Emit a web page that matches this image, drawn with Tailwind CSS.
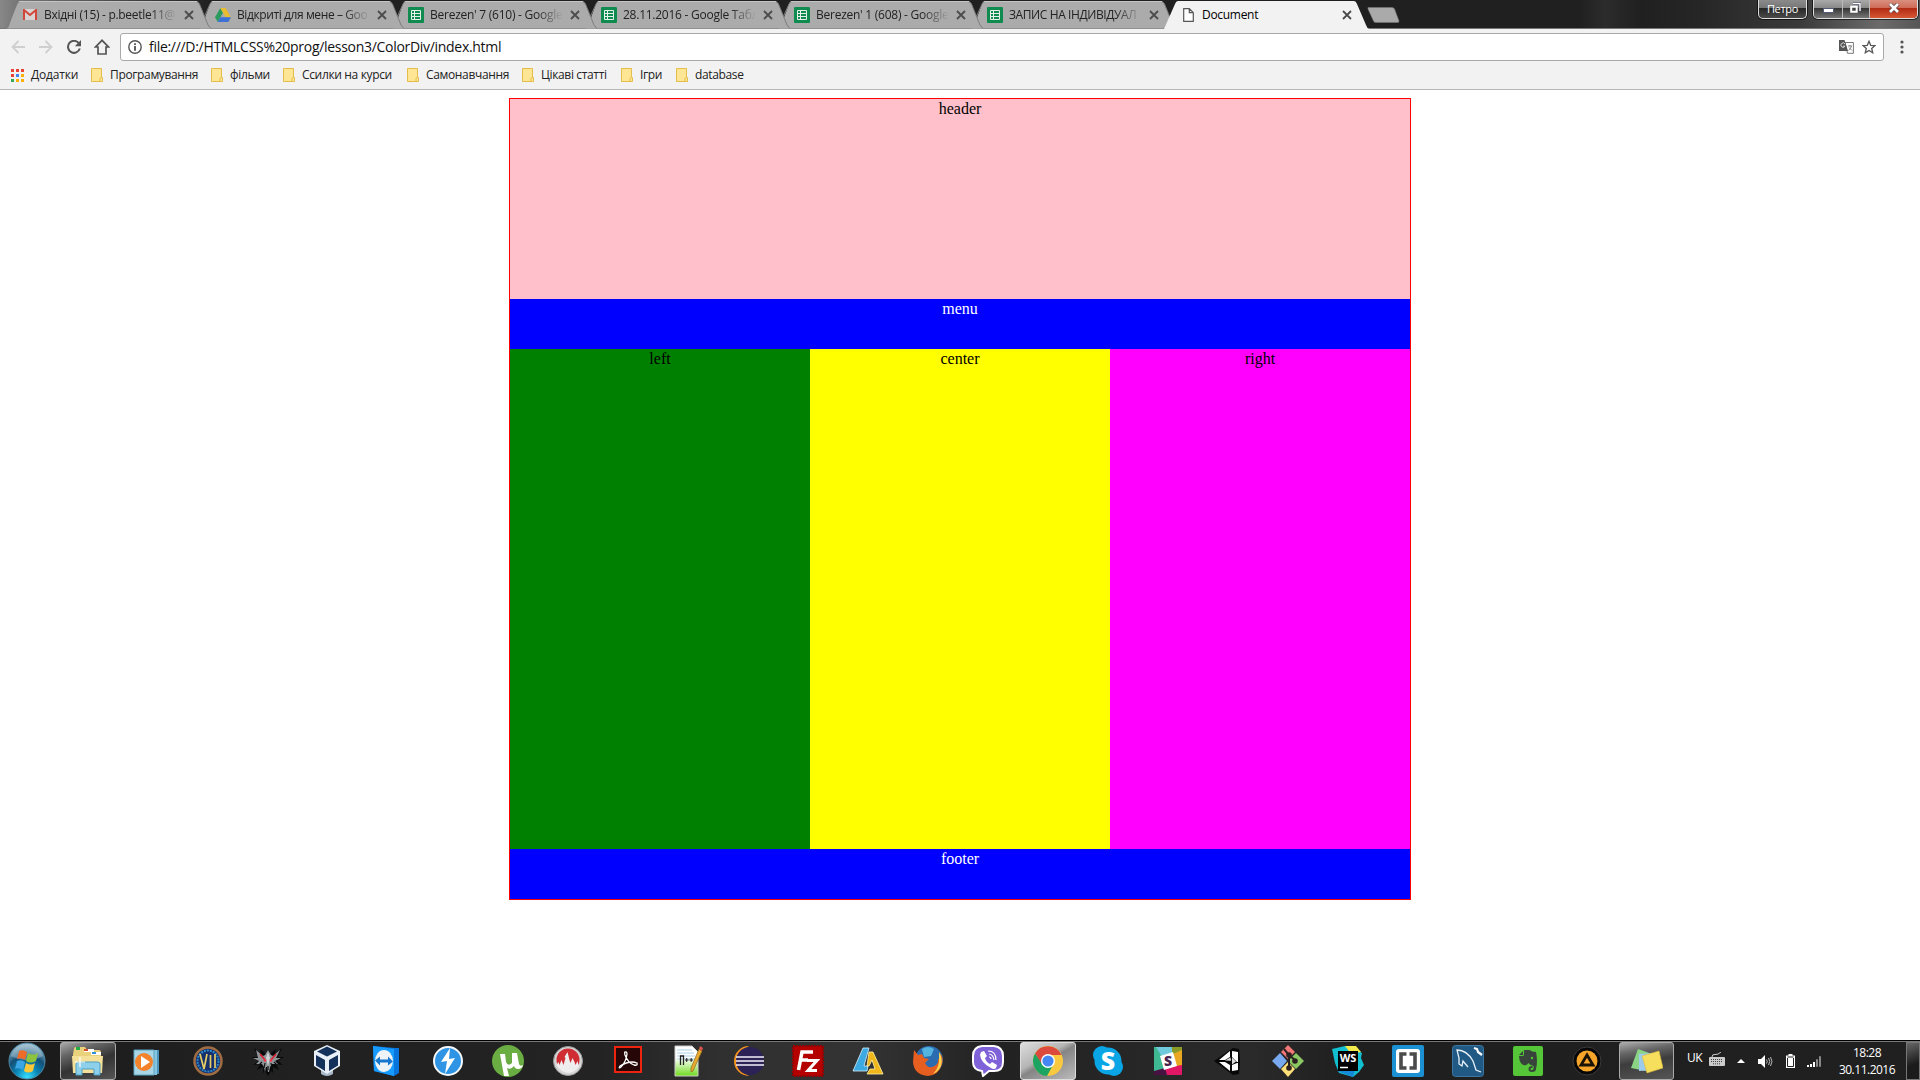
<!DOCTYPE html>
<html lang="uk">
<head>
<meta charset="utf-8">
<title>Document</title>
<script src="https://cdn.jsdelivr.net/npm/@tailwindcss/browser@4"></script>
</head>
<body class="w-[1920px] h-[1080px] overflow-hidden bg-white flex flex-col font-['Open_Sans','Noto_Sans',sans-serif] text-[12px] text-[#222]">

<svg class="hidden">
  <symbol id="tab" viewBox="0 0 205 29"><path d="M0 28.5 C3 28 3 26 4 23 L11 4 Q12 1 14 1 H190 Q192 1 193.500 4 L202 25 Q203 28 205 28.500Z" fill="#ababab"/><path d="M0 28.500 L11 4 Q12 1.500 14 1.500 H190 Q192 1.500 193.500 4 L202 25 L205 28.500" fill="none" stroke="#7d7d7d"/><path d="M13 1.500H191" stroke="#c4c4c4"/></symbol>
  <symbol id="sheet" viewBox="0 0 16 16"><rect width="16" height="16" rx="1" fill="#0f8b50"/><path d="M3.500 3.500h9v9h-9z M3.500 6.500h9 M3.500 9.500h9 M6.500 3.500v9" fill="none" stroke="#e6f0ea"/></symbol>
  <symbol id="close" viewBox="0 0 10 10"><path d="M1 1l8 8M9 1l-8 8" stroke="#4c4c4c" stroke-width="1.800"/></symbol>
  <symbol id="folder" viewBox="0 0 12 14"><path d="M.5.5h10v9h1v4H.5z" fill="#ffe694" stroke="#e5bd4b"/><path d="M9 13V10.500q0-1 1.500-1" fill="none" stroke="#e5bd4b"/></symbol>
</svg>

<!-- Tab strip -->
<header class="h-[29px] flex shrink-0 bg-[linear-gradient(90deg,#888_0,#777_16px,#202020_210px,#202020_1580px,#2c2c2c_1605px,#202020_1640px,#262626_1700px,#3a3a3a_1800px,#6b6b6b_1880px,#555_1920px)] border-b border-[#777]">
  <nav class="flex pl-[6px] h-[29px]">
    <div class="relative z-[6] w-[205px] -mr-3 h-[29px] flex items-center pl-[17px]">
      <svg class="absolute inset-0 w-[205px] h-[29px]"><use href="#tab"/></svg>
      <svg class="relative w-[14px] h-[11px] mr-[7px]" viewBox="0 0 14 11"><path d="M0 0h14v11H0z" fill="#d8d3d2"/><path d="M1 11V1l6 5 6-5v10" fill="none" stroke="#d2453a" stroke-width="2"/></svg>
      <span class="relative w-[133px] whitespace-nowrap tracking-[-0.3px] mask-r-from-80%">Вхідні (15) - p.beetle11@</span>
      <svg class="relative w-[10px] h-[10px] ml-[7px]"><use href="#close"/></svg>
    </div>
    <div class="relative z-[5] w-[205px] -mr-3 h-[29px] flex items-center pl-[16px]">
      <svg class="absolute inset-0 w-[205px] h-[29px]"><use href="#tab"/></svg>
      <svg class="relative w-4 h-[14px] mr-[6px]" viewBox="0 0 16 14"><path d="M5.300 0L0 9.300 2.700 14 8 4.700z" fill="#2c9c5e"/><path d="M5.300 0h5.400L16 9.300h-5.400z" fill="#e8bd31"/><path d="M5.400 9.300H16L13.300 14H2.700z" fill="#3c72d6"/></svg>
      <span class="relative w-[133px] whitespace-nowrap tracking-[-0.4px] mask-r-from-80%">Відкриті для мене – Goo</span>
      <svg class="relative w-[10px] h-[10px] ml-[7px]"><use href="#close"/></svg>
    </div>
    <div class="relative z-[4] w-[205px] -mr-3 h-[29px] flex items-center pl-[16px]">
      <svg class="absolute inset-0 w-[205px] h-[29px]"><use href="#tab"/></svg>
      <svg class="relative w-4 h-4 mr-[6px]"><use href="#sheet"/></svg>
      <span class="relative w-[133px] whitespace-nowrap tracking-[-0.25px] mask-r-from-80%">Berezen' 7 (610) - Google</span>
      <svg class="relative w-[10px] h-[10px] ml-[7px]"><use href="#close"/></svg>
    </div>
    <div class="relative z-[3] w-[205px] -mr-3 h-[29px] flex items-center pl-[16px]">
      <svg class="absolute inset-0 w-[205px] h-[29px]"><use href="#tab"/></svg>
      <svg class="relative w-4 h-4 mr-[6px]"><use href="#sheet"/></svg>
      <span class="relative w-[133px] whitespace-nowrap tracking-[-0.25px] mask-r-from-80%">28.11.2016 - Google Табл</span>
      <svg class="relative w-[10px] h-[10px] ml-[7px]"><use href="#close"/></svg>
    </div>
    <div class="relative z-[2] w-[205px] -mr-3 h-[29px] flex items-center pl-[16px]">
      <svg class="absolute inset-0 w-[205px] h-[29px]"><use href="#tab"/></svg>
      <svg class="relative w-4 h-4 mr-[6px]"><use href="#sheet"/></svg>
      <span class="relative w-[133px] whitespace-nowrap tracking-[-0.25px] mask-r-from-80%">Berezen' 1 (608) - Google</span>
      <svg class="relative w-[10px] h-[10px] ml-[7px]"><use href="#close"/></svg>
    </div>
    <div class="relative z-[1] w-[205px] -mr-3 h-[29px] flex items-center pl-[16px]">
      <svg class="absolute inset-0 w-[205px] h-[29px]"><use href="#tab"/></svg>
      <svg class="relative w-4 h-4 mr-[6px]"><use href="#sheet"/></svg>
      <span class="relative w-[133px] whitespace-nowrap tracking-[-0.4px] mask-r-from-80%">ЗАПИС НА ІНДИВІДУАЛ</span>
      <svg class="relative w-[10px] h-[10px] ml-[7px]"><use href="#close"/></svg>
    </div>
    <div class="relative z-10 w-[205px] h-[29px] flex items-center pl-[19px] text-black">
      <svg class="absolute inset-0 w-[205px] h-[29px]" viewBox="0 0 205 29"><path d="M0 29L11 4Q12 1 14 1H190Q192 1 193 4L202 25Q203 28 205 29z" fill="#f2f2f2"/></svg>
      <svg class="relative w-[11px] h-[14px] mr-[8px]" viewBox="0 0 11 14"><path d="M.7.700h5.600l4 4v8.600H.7zM6.300.700v4h4" fill="#fff" stroke="#555" stroke-width="1.200"/></svg>
      <span class="relative w-[133px] tracking-[-0.3px]">Document</span>
      <svg class="relative w-[10px] h-[10px] ml-[7px]"><use href="#close"/></svg>
    </div>
    <svg class="w-[34px] h-[16px] mt-[7px] -ml-[2px]" viewBox="0 0 34 16"><path d="M1 .5H25Q27 .5 27.500 2L32 14Q32 15.500 31 15.500H9Q7 15.500 6.500 14L1 2z" fill="#aaa" stroke="#777" stroke-width=".6"/></svg>
  </nav>
  <div class="ml-auto flex pr-[2px]">
    <div class="w-[49px] h-[19px] rounded-b-[5px] border border-t-0 border-[#ddd] ring-1 ring-black/60 bg-[linear-gradient(#8b8b8b_0,#777_8px,#262626_8px,#4a4a4a_100%)] text-center text-white text-[11px] leading-[17px] tracking-[-0.3px]">Петро</div>
    <div class="ml-[6px] w-[105px] h-[19px] rounded-b-[5px] border border-t-0 border-[#ddd] ring-1 ring-black/60 overflow-hidden flex">
      <div class="w-[29px] border-r border-[#bbb] bg-[linear-gradient(#aaa_0,#888_8px,#333_8px,#777_100%)] flex justify-center items-center"><div class="w-[11px] h-[5px] bg-white border border-[#555b75] mt-[2px]"></div></div>
      <div class="w-[27px] border-r border-[#bbb] bg-[linear-gradient(#aaa_0,#888_8px,#333_8px,#777_100%)] flex justify-center items-center">
        <svg class="w-3 h-3 -mt-[3px] -ml-[3px]" viewBox="0 0 12 12"><path d="M4 1.500h7V9" fill="none" stroke="#444b60" stroke-width="3"/><path d="M4 1.500h7V9" fill="none" stroke="#fff" stroke-width="1.400"/><path d="M2.200 4.700h5.500v5H2.200z" fill="#444" stroke="#fff" stroke-width="2"/></svg>
      </div>
      <div class="flex-1 bg-[linear-gradient(#d9907f_0,#cf6b57_8px,#b02a12_8px,#d75835_100%)] flex justify-center items-center">
        <svg class="w-3 h-[10px] -mt-[3px]" viewBox="0 0 12 10"><path d="M2 1l8 8M10 1L2 9" stroke="#5c4450" stroke-width="4.200"/><path d="M2 1l8 8M10 1L2 9" stroke="#fff" stroke-width="2.600"/></svg>
      </div>
    </div>
  </div>
</header>

<!-- Toolbar -->
<div class="h-[32px] shrink-0 bg-[#f2f2f2] flex items-center pl-[11px] pt-[4px]">
  <svg class="w-[14px] h-[14px]" viewBox="0 0 14 14"><path d="M14 7H1.500M7.500 1L1.500 7l6 6" fill="none" stroke="#cfcfcf" stroke-width="1.800"/></svg>
  <svg class="w-[14px] h-[14px] ml-[14px]" viewBox="0 0 14 14"><path d="M0 7h12.500M6.500 1l6 6-6 6" fill="none" stroke="#cfcfcf" stroke-width="1.800"/></svg>
  <svg class="w-[14px] h-[14px] ml-[14px]" viewBox="0 0 14 14"><path d="M11.800 3.200A6 6 0 1 0 12.800 8.500" fill="none" stroke="#555" stroke-width="2"/><path d="M14 0v6.200H7.800z" fill="#555"/></svg>
  <svg class="w-[16px] h-[16px] ml-[13px]" viewBox="0 0 16 16"><path d="M8 1.300L1.500 8H4v7h8V8h2.500z" fill="none" stroke="#555" stroke-width="1.700"/></svg>
  <div class="ml-[10px] w-[1764px] h-[28px] rounded-[3px] border border-[#a9a9a9] bg-white flex items-center pl-[7px] pr-[7px]">
    <svg class="w-[14px] h-[14px]" viewBox="0 0 14 14"><circle cx="7" cy="7" r="6.200" fill="none" stroke="#555" stroke-width="1.400"/><path d="M7 6v4.700M7 3.200v1.700" stroke="#444" stroke-width="1.700"/></svg>
    <span class="ml-[7px] text-[14px] leading-[18px] text-[#111] tracking-[-0.3px] whitespace-nowrap">file:///D:/HTMLCSS%20prog/lesson3/ColorDiv/index.html</span>
    <svg class="w-[15px] h-[14px] ml-auto" viewBox="0 0 15 14"><path d="M6 2.500h8.400v10.800H8.500z" fill="#fff" stroke="#777"/><path d="M0 0h5.500l3.500 11H0z" fill="#555"/><path d="M6 4A2.200 2.200 0 1 0 6 6.200H4" fill="none" stroke="#ddd"/><path d="M9 6h4M11 5v1M12.500 6q-1 3-3 4.500M10 7.500l3 3" fill="none" stroke="#777" stroke-width=".9"/></svg>
    <svg class="w-[14px] h-[14px] ml-[8px]" viewBox="0 0 14 14"><path d="M7 1.300l1.700 4 4.300.3-3.300 2.800 1 4.300L7 10.400l-3.700 2.300 1-4.300L1 5.600l4.300-.3z" fill="none" stroke="#555" stroke-width="1.300"/></svg>
  </div>
  <svg class="w-[4px] h-[14px] ml-[16px]" viewBox="0 0 4 14"><g fill="#555"><circle cx="2" cy="2" r="1.600"/><circle cx="2" cy="7" r="1.600"/><circle cx="2" cy="12" r="1.600"/></g></svg>
</div>

<!-- Bookmarks -->
<div class="h-[29px] shrink-0 bg-[#f2f2f2] border-b border-[#b6b6b6] flex items-center pl-[11px] text-[12px] text-[#222] tracking-[-0.35px] whitespace-nowrap">
  <div class="w-[80px] flex items-center tracking-[-0.2px]"><svg class="w-[13px] h-[13px] mr-[7px]" viewBox="0 0 13 13"><path d="M0 0h3v3H0zM5 0h3v3H5zM10 0h3v3h-3zM0 5h3v3H0z" fill="#ea4335"/><path d="M5 5h3v3H5z" fill="#4285f4"/><path d="M10 5h3v3h-3zM5 10h3v3H5zM10 10h3v3h-3z" fill="#fbb004"/><path d="M0 10h3v3H0z" fill="#34a853"/></svg>Додатки</div>
  <div class="w-[120px] flex items-center"><svg class="w-3 h-[14px] mr-[7px]"><use href="#folder"/></svg>Програмування</div>
  <div class="w-[72px] flex items-center"><svg class="w-3 h-[14px] mr-[7px]"><use href="#folder"/></svg>фільми</div>
  <div class="w-[124px] flex items-center"><svg class="w-3 h-[14px] mr-[7px]"><use href="#folder"/></svg>Ссилки на курси</div>
  <div class="w-[115px] flex items-center"><svg class="w-3 h-[14px] mr-[7px]"><use href="#folder"/></svg>Самонавчання</div>
  <div class="w-[99px] flex items-center"><svg class="w-3 h-[14px] mr-[7px]"><use href="#folder"/></svg>Цікаві статті</div>
  <div class="w-[55px] flex items-center"><svg class="w-3 h-[14px] mr-[7px]"><use href="#folder"/></svg>Ігри</div>
  <div class="w-[80px] flex items-center"><svg class="w-3 h-[14px] mr-[7px]"><use href="#folder"/></svg>database</div>
</div>

<!-- Page -->
<main class="flex-1 pt-2 font-['Liberation_Serif',serif] text-[16px] leading-[20px] text-center text-black">
  <div class="w-[902px] mx-auto border border-[#f00]">
    <div class="h-[200px] bg-[#ffc0cb]">header</div>
    <div class="h-[50px] bg-[#00f] text-white">menu</div>
    <div class="grid grid-cols-3 h-[500px]">
      <div class="bg-[#008000]">left</div>
      <div class="bg-[#ff0]">center</div>
      <div class="bg-[#f0f]">right</div>
    </div>
    <div class="h-[50px] bg-[#00f] text-white">footer</div>
  </div>
</main>

<!-- Taskbar -->
<footer class="h-10 shrink-0 border-t border-black bg-[#222] flex">
 <div class="w-full border-t border-[#777] flex bg-[linear-gradient(90deg,#1a1a1a_0,#202020_200px,#232323_600px,#303030_720px,#333_860px,#222_1000px,#2a2a2a_1250px,#1f1f1f_1350px,#202020_1920px)]">
  <div class="w-[58px] flex items-center pl-[8px]">
    <svg class="w-[38px] h-[38px]" viewBox="0 0 38 38"><defs><radialGradient id="orb" cx=".5" cy=".95" r=".9"><stop offset="0" stop-color="#38e0ff"/><stop offset=".35" stop-color="#0a87b8"/><stop offset=".65" stop-color="#134f76"/><stop offset="1" stop-color="#9cc0d2"/></radialGradient></defs><circle cx="19" cy="19" r="18" fill="url(#orb)" stroke="#4c88a6"/><path d="M3 14Q19 22 35 14A17 17 0 0 0 3 14z" fill="#b7cfda" opacity=".4"/><path d="M11 9q4-2 8 1l-2 8q-4-3-8-1z" fill="#ee6b28"/><path d="M20 11q5 3 10 0l-2 8q-5 3-10 0z" fill="#8cc43e"/><path d="M9 19q4-2 8 1l-2 8q-4-3-8-1z" fill="#3ba5e6"/><path d="M18 21q5 3 9 0l-2 8q-5 3-9 0z" fill="#fbc83a"/></svg>
  </div>
  <div class="w-[1620px] flex items-center">
    <div class="w-[60px] flex justify-center"><div class="w-[56px] h-[38px] rounded-[3px] border border-[#aaa] bg-[linear-gradient(160deg,#aaa_0,#666_25%,#333_55%,#555_100%)] flex items-center justify-center">
      <svg class="w-8 h-8" viewBox="0 0 32 32"><path d="M2 4Q2 2 4 2h9l2 3h12q2 0 2 3v20H1V9z" fill="#ead17b"/><path d="M4 2h4v3H4z" fill="#20ae49"/><path d="M12 4h10v3H12z" fill="#fff"/><path d="M12 4h4v2h-4z" fill="#d64b28"/><path d="M19 7h10v3H19z" fill="#fff"/><path d="M20 7h4v2h-4z" fill="#3090d8"/><path d="M0 11h31l-1 17H1z" fill="#f5e09a"/><path d="M4 19q0-2 3-2h18q3 0 3 2v11h-6v-6H10v6H4z" fill="#8ed0ea" stroke="#4ba0c8"/><path d="M8 12v10M3 17h10" stroke="#fff" stroke-width="1.200"/></svg></div></div>
    <div class="w-[60px] flex justify-center"><svg class="w-8 h-8 -ml-[2px]" viewBox="0 0 32 32"><path d="M10 5h18v24H10z" fill="#4b93b8"/><path d="M6 5h20v25H6z" fill="#86c5e0"/><path d="M3 5h20v25H3z" fill="#a8d6e6" stroke="#5aa3c0"/><circle cx="13" cy="17" r="9" fill="#f4822a"/><path d="M10 11v12l9-6z" fill="#fff"/></svg></div>
    <div class="w-[60px] flex justify-center"><svg class="w-8 h-8" viewBox="0 0 32 32"><circle cx="16" cy="16" r="13.500" fill="#152f6c" stroke="#a06d43" stroke-width="2.500"/><circle cx="16" cy="16" r="10.500" fill="none" stroke="#2989c9" stroke-width="2" stroke-dasharray="2 1"/><path d="M8 9l4 15 3-15M18.500 10v13M23 9v14" fill="none" stroke="#e4cc62" stroke-width="1.700"/></svg></div>
    <div class="w-[60px] flex justify-center"><svg class="w-8 h-8" viewBox="0 0 32 32"><path d="M2 3l7 6-1-5 6 5 2-4 2 4 6-5-1 5 7-6-4 9 6 0-6 4 5 4-7-1 3 6-6-3 0 6-2-2-3 5-3-5-2 2 0-6-6 3 3-6-7 1 5-4-6-4h6z" fill="#08090a"/><path d="M4 5l7 6 2-1 3-5 3 5 2 1 7-6-4 8 5 0-6 3 3 3-6 0-2 3-1 5-1 0-1-5-1 0-1 5-1-5-2-3-6 0 3-3-6-3 5 0z" fill="#8f9598"/><path d="M16 7l2 6-2 8-2-8z" fill="#cfd3d5"/><path d="M8 9l5 6M24 9l-5 6" stroke="#e0182c" stroke-width="1.400"/><path d="M12 15l2 1M20 15l-2 1" stroke="#ff3344" stroke-width="2"/><path d="M13 18l-1 5M19 18l1 5M10 17l-3 3M22 17l3 3M16 21v4" stroke="#111" stroke-width="1.200"/></svg></div>
    <div class="w-[60px] flex justify-center"><svg class="w-8 h-8 -ml-[2px]" viewBox="0 0 32 32"><path d="M10 23h12v6q-6 4-12 0z" fill="#a9b9cb"/><path d="M16 0l13 6v15l-13 8-13-8V6z" fill="#e9eff6"/><path d="M16 1.500l10 5-10 5-10-5zM5 10l9 5v11l-9-5.500zM27 10l-9 5v11l9-5.500z" fill="#14315b"/></svg></div>
    <div class="w-[60px] flex justify-center"><svg class="w-8 h-8 -ml-[4px]" viewBox="0 0 32 32"><path d="M3 1l22 2 4 0v25l-5 3L4 26z" fill="#0875dc"/><path d="M3 1l21 3v27L4 26z" fill="#189bff"/><ellipse cx="14" cy="16" rx="9" ry="11" fill="#edf3f7"/><path d="M5 15.500l5-4v3h8v-3l5 5-5 4v-3h-8v3z" fill="#1677cf"/></svg></div>
    <div class="w-[60px] flex justify-center"><svg class="w-8 h-8" viewBox="0 0 32 32"><circle cx="16" cy="16" r="14" fill="#2f94e4" stroke="#f4f8fb" stroke-width="2"/><path d="M18 3L9 17l6-1-2 13 10-16-6 1z" fill="#fff"/></svg></div>
    <div class="w-[60px] flex justify-center"><svg class="w-8 h-8" viewBox="0 0 32 32"><circle cx="16" cy="16" r="16" fill="#6aad43"/><path d="M8 9l5 0 1 8q2 5 6 1l0-10h5l2 11q1 3 4 1-1 4-5 4-3 0-4-3-3 4-7 2l2 8h-5z" fill="#fff"/></svg></div>
    <div class="w-[60px] flex justify-center"><svg class="w-8 h-8 -ml-[1px]" viewBox="0 0 32 32"><circle cx="16" cy="16" r="14.500" fill="#d5d5d5" stroke="#999"/><circle cx="16" cy="15" r="11.500" fill="#cf2d33"/><path d="M4.500 20l2-3 1 3 2-5 2 5 2-7-1-1 3-5 2 8 1 3 2-5 2 4 1 3 2-4 1 4 1.500-1q-2 7-11 9-9-1-12.500-8z" fill="#eee"/></svg></div>
    <div class="w-[60px] flex justify-center"><svg class="w-8 h-8" viewBox="0 0 32 32"><path d="M3 2h26v25H3z" fill="#260606" stroke="#ed2410" stroke-width="2"/><path d="M14 7q-2-1-1 3 3 8 9 10 4 1 3-2-7-3-17 3-2 3 1 1 5-5 6-13 0-2-1-2z" fill="none" stroke="#fff" stroke-width="1.300"/></svg></div>
    <div class="w-[60px] flex justify-center"><svg class="w-8 h-8" viewBox="0 0 32 32"><defs><linearGradient id="np" x2="0" y2="1"><stop offset=".4" stop-color="#fff"/><stop offset="1" stop-color="#6fdb1d"/></linearGradient></defs><path d="M3 1h17l6 6v24H3z" fill="url(#np)" stroke="#ccc"/><path d="M5 5h15M5 8h17M5 11h18M5 14h19" stroke="#a8cfe4"/><path d="M8.500 20V11h3v9" fill="none" stroke="#222" stroke-width="1.300"/><path d="M13 15h3.500M14.700 13v4M17.500 15H21M19.200 13v4" fill="none" stroke="#222"/><path d="M27 4l3 2-9 20-2 1v-4z" fill="#e7aa2e" stroke="#8d671e" stroke-width=".7"/><path d="M28 1l3 2-1 3-3-2z" fill="#d9534c"/></svg></div>
    <div class="w-[60px] flex justify-center"><svg class="w-8 h-8 -ml-[1px]" viewBox="0 0 32 32"><path d="M17 1A15 15 0 0 0 17 31 17 17 0 0 1 17 1z" fill="#f7941e"/><circle cx="18" cy="16" r="14" fill="#2c2255"/><path d="M4 12h28M4 16h28M4 20h28" stroke="#f2eff7" stroke-width="1.600"/></svg></div>
    <div class="w-[60px] flex justify-center"><svg class="w-8 h-8" viewBox="0 0 32 32"><path d="M1 1h30v30H1z" fill="#b50000" stroke="#950000" stroke-width="2" stroke-dasharray="2 1"/><path d="M6.500 25L10 7h11M8 15h8" fill="none" stroke="#fff" stroke-width="3.600"/><path d="M15 15.500h10l-9 10h9" fill="none" stroke="#fff" stroke-width="3"/></svg></div>
    <div class="w-[60px] flex justify-center"><svg class="w-8 h-8" viewBox="0 0 32 32"><path d="M11 3h6l-5 18h4l-1 5H1z" fill="#3da9e2" stroke="#d5f1ff" stroke-width=".8"/><path d="M17 7h4l10 22H15l3-5h5l-3-9-3 6-2 0z" fill="#f0b71b" stroke="#fff2aa" stroke-width=".8"/></svg></div>
    <div class="w-[60px] flex justify-center"><svg class="w-8 h-8" viewBox="0 0 32 32"><circle cx="17" cy="15" r="14" fill="#2b6cb0"/><path d="M10 4q6-4 12 0l-3 7-7 1z" fill="#55b4df"/><path d="M27 7q5 5 3 12-3 11-14 12Q2 30 1 17L2 5l4 5 4-1 2 4 5 1-4 4q2 5 7 4 7-2 6-8l3 2q1-4-2-9z" fill="#e65f20"/><path d="M27 7q4 6 2 14-3 6-8 8 7-7 6-17z" fill="#fbd34b"/></svg></div>
    <div class="w-[60px] flex justify-center"><svg class="w-8 h-8" viewBox="0 0 32 32"><path d="M10 1h12q9 1 9 10v6q0 9-9 9h-5l-6 5-1-5Q1 25 1 17v-6Q1 2 10 1z" fill="#8062d8" stroke="#fff" stroke-width="2"/><path d="M9 7l3-1 3 5-2 2q1 4 5 6l2-2 5 3-1 3q-2 2-5 0Q9 18 8 10z" fill="#fff"/><path d="M16 6q8 0 8 9M17 9q4 0 5 6M17 12q2 0 2 2" fill="none" stroke="#fff" stroke-width="1.200"/></svg></div>
    <div class="w-[60px] flex justify-center"><div class="w-[56px] h-[38px] rounded-[3px] border border-[#ddd] bg-[linear-gradient(150deg,#ddd_0,#b5b5b5_40%,#858585_50%,#bbb_100%)] flex items-center justify-center">
      <svg class="w-8 h-8" viewBox="0 0 32 32"><circle cx="16" cy="16" r="15" fill="#fbc940"/><path d="M3 8.500A15 15 0 0 1 29.500 10H16l-6 10z" fill="#dc4a3e"/><path d="M3 8.500A15 15 0 0 0 15 31l6-11-11-1z" fill="#1da462"/><circle cx="16" cy="16" r="7" fill="#fff"/><circle cx="16" cy="16" r="5.600" fill="#4587f3"/></svg></div></div>
    <div class="w-[60px] flex justify-center"><svg class="w-8 h-8" viewBox="0 0 32 32"><circle cx="10" cy="10" r="9" fill="#0aa5e5"/><circle cx="22" cy="22" r="9" fill="#0aa5e5"/><circle cx="16" cy="16" r="13.500" fill="#0aa5e5"/><text x="16" y="25" text-anchor="middle" font-family="Open Sans" font-weight="800" font-size="25" fill="#fff">S</text></svg></div>
    <div class="w-[60px] flex justify-center"><svg class="w-8 h-8" viewBox="0 0 32 32"><path d="M2 2h28v28H2z" fill="#3eb991"/><path d="M4 2h16l1 8-11 2z" fill="#70cadb"/><path d="M20 2h10v5l-10 4z" fill="#8a9b26"/><path d="M21 9l9-4v16l-6 1z" fill="#e9a820"/><path d="M24 21l6-1v10H15l-3-6z" fill="#e01765"/><path d="M2 26l11-3 2 7H2z" fill="#471242"/><path d="M8 11l13-4 4 14-13 4z" fill="#fff"/><text x="16" y="21" text-anchor="middle" font-family="Open Sans" font-weight="800" font-size="14" fill="#4b244d">S</text></svg></div>
    <div class="w-[60px] flex justify-center"><svg class="w-8 h-8" viewBox="0 0 32 32"><path d="M2 16L21 3l6 1 1 12-1 13-6 1z" fill="#080808"/><path d="M7 15L18 6v6l-5 3zM20 6l6 1 0 10-1 0-5-5zM7 17h6l5 3v6zM20 20l5-2 1 0 0 7-6 1z" fill="#fff"/><path d="M13 15.500l5.500-3 .5 3.200zM20 12.500l4 4-4 3z" fill="#ddd"/></svg></div>
    <div class="w-[60px] flex justify-center"><svg class="w-8 h-8" viewBox="0 0 32 32"><path d="M16 0l7 7-7 7-7-7z" fill="#f27676"/><path d="M8 8l7 8-7 8-8-8z" fill="#78a8ee"/><path d="M24 8l8 8-8 8-8-8z" fill="#8bc864"/><path d="M16 17l7 7-7 8-7-8z" fill="#ffe079"/><path d="M12 4l5 6v13M17 10l7 6" fill="none" stroke="#2b2020" stroke-width="2"/><circle cx="17" cy="10" r="2.800" fill="#2b2020"/><circle cx="17" cy="23" r="2.800" fill="#2b2020"/><circle cx="23" cy="16" r="2.800" fill="#2b2020"/></svg></div>
    <div class="w-[60px] flex justify-center"><svg class="w-8 h-8" viewBox="0 0 32 32"><path d="M0 4l13-3 9 2 8 5-1 5 3 7-5 7-6 5-14-4-4-10z" fill="#12bfd0"/><path d="M13 1l11 0 5 6-10 2z" fill="#f2e94d"/><path d="M5 26l18-1-2 7z" fill="#1688d8"/><path d="M6 6h20v20H6z" fill="#000"/><text x="16" y="17" text-anchor="middle" font-family="Open Sans" font-weight="700" font-size="11" fill="#fff">WS</text><path d="M8 22.500h8" stroke="#fff" stroke-width="1.500"/></svg></div>
    <div class="w-[60px] flex justify-center"><svg class="w-8 h-8" viewBox="0 0 32 32"><rect width="32" height="32" rx="2" fill="#1b91d4"/><rect x="4" y="4" width="24" height="24" rx="3" fill="#fff"/><path d="M14.500 9H9v14h5.500M17.500 9H23v14h-5.500" fill="none" stroke="#4b4b4b" stroke-width="3.600"/></svg></div>
    <div class="w-[60px] flex justify-center"><svg class="w-8 h-8" viewBox="0 0 32 32"><rect x=".5" y=".5" width="31" height="31" rx="3" fill="#215985" stroke="#3a77a3"/><path d="M29 27l-5-2-3-9Q15 5 5 5l2 8 0 6 3 2 1-5 5 6" fill="none" stroke="#e8f1f7" stroke-width="1.300"/><path d="M22 3l3 1 1 3 4 3" fill="none" stroke="#fff" stroke-width="2.200"/></svg></div>
    <div class="w-[60px] flex justify-center"><svg class="w-8 h-8" viewBox="0 0 32 32"><rect x="1" y="1" width="30" height="30" rx="2" fill="#54c637"/><path d="M12 5h5q2 0 3 1.500l4 .5q2 9 0 17 0 3-4 3-3.500 0-3.500-3t4-3v2q-2-.5-2 1t2 1q1.500-1 1-4-4-1-5-3-2 3-5 2-4-1-4.500-9h4q1 0 1-2z" fill="#38443b"/><path d="M7 10l4-4v4z" fill="#38443b"/><circle cx="20" cy="13" r="1.200" fill="#54c637"/></svg></div>
    <div class="w-[60px] flex justify-center"><svg class="w-8 h-8" viewBox="0 0 32 32"><circle cx="15" cy="16" r="14" fill="#070707" stroke="#3c3c3c"/><circle cx="15" cy="16" r="10.500" fill="#f5a52a"/><path d="M15 10l6 10H9z" fill="none" stroke="#1a1205" stroke-width="2.800"/></svg></div>
    <div class="w-[60px] flex justify-start pl-[1px]"><div class="w-[55px] h-[38px] rounded-[3px] border border-[#aaa] bg-[linear-gradient(170deg,#aaa_0,#666_25%,#3d3d3d_50%,#555_100%)] flex items-center justify-center">
      <svg class="w-8 h-8" viewBox="0 0 32 32"><path d="M7 4l14 5-6 17-15-3z" fill="#8bd486"/><path d="M8 9l14-1 1 17-15 1z" fill="#9ccbee"/><path d="M11 11l17-5 4 17-16 5z" fill="#f6df5c" stroke="#dbb93d" stroke-width=".6"/></svg></div></div>
  </div>
  <div class="flex-1 flex items-center pl-[9px] text-white">
    <span class="w-[22px] text-[12px] -mt-[6px] tracking-[-0.6px]">UK</span>
    <svg class="w-[16px] h-[14px] -mt-[5px]" viewBox="0 0 16 14"><rect y="5" width="16" height="9" rx="1" fill="#ccc"/><path d="M2 7.500h12M2 9.500h12M4 11.800h8" stroke="#444" stroke-dasharray="1 1"/><path d="M3 5q0-3 3-2.500t6-2.500" fill="none" stroke="#ccc"/></svg>
    <svg class="w-[8px] h-[4px] ml-[12px]" viewBox="0 0 8 4"><path d="M4 0l4 4H0z" fill="#fff"/></svg>
    <svg class="w-[15px] h-[13px] ml-[13px]" viewBox="0 0 15 13"><path d="M0 4h3l4-4v13L3 9H0z" fill="#fff"/><path d="M8.500 4.500q1.500 2 0 4M10.500 3q2.500 3.500 0 7M12.500 2q3 4.500 0 9" fill="none" stroke="#ccc" stroke-width=".9"/></svg>
    <svg class="w-[9px] h-[14px] ml-[13px]" viewBox="0 0 9 14"><path d="M2.500 0h4v1.500H9V14H0V1.500h2.500z" fill="#fff"/><path d="M1.500 4v8.500h6V4M1.500 3h6" fill="none" stroke="#222"/></svg>
    <svg class="w-[15px] h-[11px] ml-[12px]" viewBox="0 0 15 11"><path d="M0 9h2v2H0zM3 8h2v3H3zM6 6h2v5H6z" fill="#fff"/><path d="M9.500 3.500h1v7h-1zM12.500 .5h1v10h-1z" fill="#444" stroke="#888"/></svg>
    <div class="w-[70px] ml-[10px] text-center text-[12px] leading-[17px] tracking-[-0.5px]"><div>18:28</div><div>30.11.2016</div></div>
    <div class="ml-auto w-[14px] h-[38px] border border-[#777] bg-[linear-gradient(160deg,#666_0,#333_40%,#1b1b1b_60%)]"></div>
  </div>
 </div>
</footer>
</body>
</html>
